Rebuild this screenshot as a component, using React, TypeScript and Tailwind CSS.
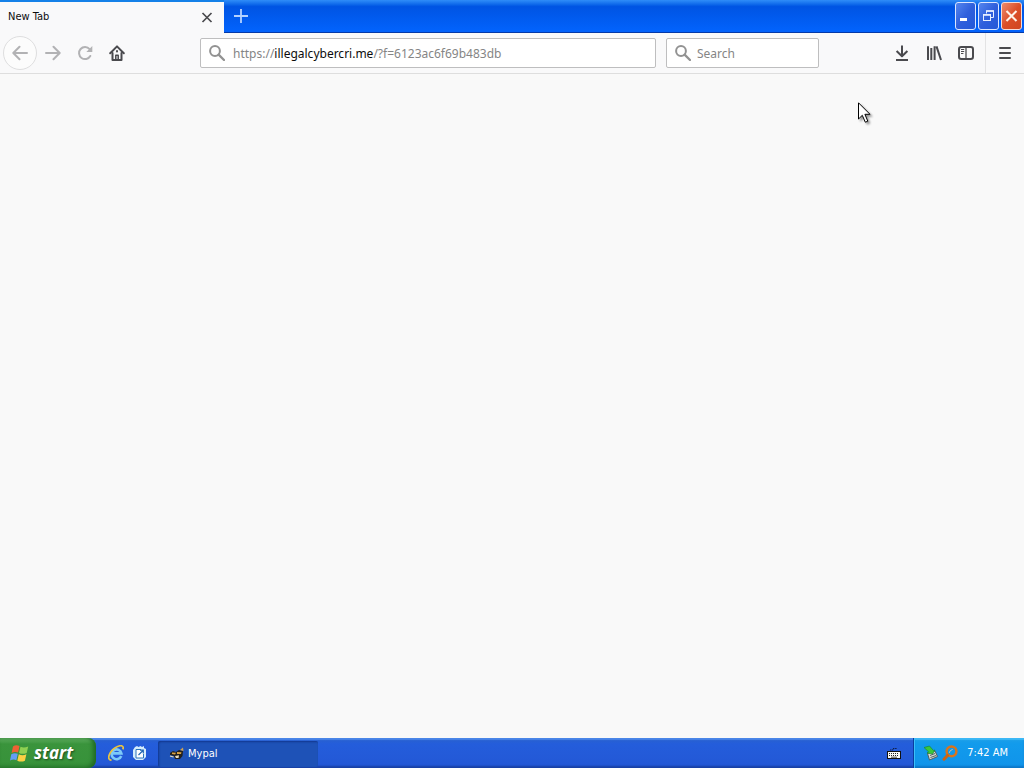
import { useState } from "react";
import type { ReactNode } from "react";

const GLYPH = "w-4 h-4 fill-none stroke-current";

interface ToolButtonProps {
  label: string;
  disabled?: boolean;
  children: ReactNode;
}

function ToolButton({ label, disabled, children }: ToolButtonProps) {
  return (
    <button
      aria-label={label}
      disabled={disabled}
      className="flex h-8 w-8 shrink-0 items-center justify-center text-[#4a4a4e] disabled:text-[#b2b2b4]"
    >
      {children}
    </button>
  );
}

function SearchGlyph() {
  return (
    <svg viewBox="0 0 16 16" className="h-4 w-4 shrink-0 fill-none stroke-[#929292]" strokeWidth="2">
      <circle cx="6" cy="6" r="4.9" />
      <path d="M9.6 9.6 L15 15" strokeWidth="2.3" strokeLinecap="round" />
    </svg>
  );
}

function TabStrip() {
  return (
    <header className="flex h-[33px] shrink-0 items-stretch bg-linear-to-b from-[#2f8df8] from-0% via-[#0054e3] via-20% to-[#0262fb] to-90%">
      <div className="flex w-56 shrink-0 items-center justify-between border-t-2 border-[#1581e8] bg-[#f9f9fa] pl-2 pr-[11px] text-[11px] text-[#0c0c0d]">
        <span>New Tab</span>
        <button aria-label="Close tab" className="text-[#4a4a4e]">
          <svg viewBox="0 0 12 12" className="h-3 w-3 fill-none stroke-current" strokeWidth="1.7">
            <path d="M1.5 1 L10.5 10 M10.5 1 L1.5 10" />
          </svg>
        </button>
      </div>
      <div className="flex flex-1 items-start justify-between border-b border-[#0439a8]">
        <button aria-label="New tab" className="flex h-8 w-[34px] items-center justify-center text-[#b4d2ff]">
          <svg viewBox="0 0 14 14" className="h-3.5 w-3.5 fill-none stroke-current" strokeWidth="1.8">
            <path d="M7 0 V14 M0 7 H14" />
          </svg>
        </button>
        <WindowButtons />
      </div>
    </header>
  );
}

function WindowButtons() {
  return (
    <div className="flex gap-0.5 pr-0.5 pt-0.5">
      <button
        aria-label="Minimize"
        className="h-7 w-[21px] rounded-[3px] border border-[#dbe6ff] bg-linear-to-br from-[#5585ee] via-[#2f5fdc] to-[#2458d8]"
      >
        <svg viewBox="0 0 19 26" className="h-[26px] w-[19px]">
          <rect x="4" y="15" width="7" height="3" fill="#fff" />
        </svg>
      </button>
      <button
        aria-label="Restore"
        className="h-7 w-[21px] rounded-[3px] border border-[#dbe6ff] bg-linear-to-br from-[#5585ee] via-[#2f5fdc] to-[#2458d8]"
      >
        <svg viewBox="0 0 19 26" className="h-[26px] w-[19px] fill-none stroke-[#e6eeff]">
          <path d="M7.5 10.5 V8 H14.5 V14.5 H12" />
          <path d="M7 8 H15" strokeWidth="1.6" />
          <rect x="4.5" y="11.5" width="7" height="6" />
          <path d="M4 12 H12" strokeWidth="1.6" />
        </svg>
      </button>
      <button
        aria-label="Close"
        className="h-7 w-[21px] rounded-[3px] border border-[#f6dcd6] bg-linear-to-br from-[#ec8a6c] via-[#dc4f28] to-[#cf4620]"
      >
        <svg viewBox="0 0 19 26" className="h-[26px] w-[19px] fill-none stroke-[#fff3e8]" strokeWidth="2.1">
          <path d="M4.5 8 L14.5 18 M14.5 8 L4.5 18" />
        </svg>
      </button>
    </div>
  );
}

function AddressBar() {
  const [address, setAddress] = useState("https://illegalcybercri.me/?f=6123ac6f69b483db");
  const parts = address.match(/^(\w+:\/\/)?([^/]*)(.*)$/);

  return (
    <div className="group flex h-[30px] min-w-0 flex-1 items-center gap-2 rounded-xs border border-[#bebebf] bg-white px-2">
      <SearchGlyph />
      <div className="relative flex h-full min-w-0 flex-1 items-center">
        {/* the domain is emphasised until the field gets the focus */}
        <div
          aria-hidden="true"
          className="pointer-events-none absolute inset-x-0 overflow-hidden whitespace-pre pt-0.5 text-[12px] text-[#858585] group-focus-within:hidden"
        >
          {parts?.[1]}
          <span className="text-[#0c0c0d]">{parts?.[2]}</span>
          {parts?.[3]}
        </div>
        <input
          type="text"
          aria-label="Search or enter address"
          value={address}
          onChange={(e) => setAddress(e.target.value)}
          className="w-full bg-transparent pt-0.5 text-[12px] text-transparent outline-none focus:text-[#0c0c0d]"
        />
      </div>
    </div>
  );
}

function Toolbar() {
  return (
    <nav className="flex h-[41px] shrink-0 items-center border-b border-[#dedede] bg-[#f9f9fa] px-[3px]">
      <button
        aria-label="Back"
        disabled
        className="flex h-[34px] w-[34px] shrink-0 items-center justify-center rounded-full border border-[#dededf] bg-[#fcfcfc] text-[#b2b2b4]"
      >
        <svg viewBox="0 0 16 16" className={GLYPH} strokeWidth="2" strokeLinecap="round" strokeLinejoin="round">
          <path d="M15 8 H1.5 M7.5 1.8 L1.3 8 L7.5 14.2" />
        </svg>
      </button>
      <ToolButton label="Forward" disabled>
        <svg viewBox="0 0 16 16" className={GLYPH} strokeWidth="2" strokeLinecap="round" strokeLinejoin="round">
          <path d="M1 8 H14.5 M8.5 1.8 L14.7 8 L8.5 14.2" />
        </svg>
      </ToolButton>
      <ToolButton label="Reload" disabled>
        <svg viewBox="0 0 16 16" className={GLYPH} strokeWidth="2">
          <path d="M12.6 4.2 A6 6 0 1 0 13.3 11" strokeLinecap="round" />
          <path d="M15.3 1 V7 H9.3 Z" fill="currentColor" stroke="none" />
        </svg>
      </ToolButton>
      <ToolButton label="Home">
        <svg viewBox="0 0 16 16" className={GLYPH} strokeWidth="2" strokeLinecap="round" strokeLinejoin="round">
          <path d="M1.2 8.2 L8 1.4 L14.8 8.2" />
          <path d="M3.5 8 V15 H12.5 V8" />
          <path d="M6.8 15 V10.2 H9.2 V15" strokeWidth="1.5" />
          <path d="M8 6 V6.6" />
        </svg>
      </ToolButton>

      <div className="flex min-w-0 flex-1 items-center gap-2.5 px-[67px] font-['Noto_Sans','Open_Sans',sans-serif]">
        <AddressBar />
        <label className="flex h-[30px] w-[153px] items-center gap-[6px] rounded-xs border border-[#bebebf] bg-white px-2">
          <SearchGlyph />
          <input
            type="text"
            aria-label="Search"
            placeholder="Search"
            className="w-full min-w-0 bg-transparent pt-0.5 text-[12px] text-[#0c0c0d] outline-none placeholder:text-[#858585]"
          />
        </label>
      </div>

      <ToolButton label="Downloads">
        <svg viewBox="0 0 16 16" className={GLYPH} strokeWidth="2" strokeLinejoin="round">
          <path d="M8 0.5 V11 M2.6 6 L8 11.3 L13.4 6 M2 15 H14" />
        </svg>
      </ToolButton>
      <ToolButton label="Library">
        <svg viewBox="0 0 16 16" className={GLYPH} strokeWidth="2">
          <path d="M2 1.2 V15 M5.3 3 V15 M8.6 1.2 V15 M10.5 1.4 L15 15" />
        </svg>
      </ToolButton>
      <ToolButton label="Sidebars">
        <svg viewBox="0 0 16 16" className={GLYPH} strokeWidth="2">
          <rect x="1" y="2" width="14" height="12" rx="2.2" />
          <path d="M8 2 V14" strokeWidth="1.3" />
          <path d="M3 4.5 H6.2 M3 6.5 H6.2 M3 8.5 H5.4" strokeWidth="1" />
        </svg>
      </ToolButton>
      <div className="mx-[3px] h-full w-px shrink-0 bg-[#e3e3e4]" />
      <ToolButton label="Open menu">
        <svg viewBox="0 0 16 16" className={GLYPH} strokeWidth="2" strokeLinecap="round">
          <path d="M3 3 H13 M3 8 H13 M3 13 H13" />
        </svg>
      </ToolButton>
    </nav>
  );
}

function Taskbar() {
  return (
    <footer className="flex h-[30px] shrink-0 items-stretch bg-linear-to-b from-[#2a62cc] from-0% via-[#245ddb] via-20% to-[#2358d6] to-90% text-[11px] text-white shadow-[inset_0_2px_1px_#4a86e8,inset_0_-2px_2px_#1941a5]">
      <button className="flex w-24 shrink-0 items-center gap-1 rounded-r-lg bg-linear-to-b from-[#5fae60] from-0% via-[#3a943c] via-20% to-[#37923a] to-100% pl-2.5 shadow-[inset_-3px_-1px_4px_#1f6a24]">
        <svg viewBox="0 0 20 20" className="h-5 w-5">
          <path d="M3 3.5 Q6 1.2 9.5 3.1 L8.1 9.6 Q5 8.1 1.6 10 Z" fill="#ee6134" />
          <path d="M10.5 3.7 Q13.8 5.4 18.2 3.5 L16.7 10 Q12.8 11.7 9 10 Z" fill="#8fd052" />
          <path d="M1.3 11.2 Q4.5 9.4 7.8 10.8 L6.4 17.2 Q3.3 15.7 0 17.6 Z" fill="#659df5" />
          <path d="M8.8 11.3 Q12.5 13 16.4 11.3 L14.9 17.7 Q11.2 19.5 7.3 17.7 Z" fill="#fbd044" />
        </svg>
        <span className="font-['Open_Sans','Noto_Sans',sans-serif] text-[17px] font-bold italic leading-5 [text-shadow:1px_1px_2px_#1c4d1c]">
          start
        </span>
      </button>

      <div className="flex items-center gap-2 pl-3 pr-[10px]">
        <button aria-label="Internet Explorer">
          <svg viewBox="0 0 16 16" className="h-4 w-4 fill-none">
            <path d="M13.2 11 A4.9 4.9 0 1 1 13.4 8.4 H5" stroke="#7dcaf8" strokeWidth="2.6" />
            <path d="M3.5 15.2 C-2.5 15 2 5 9 1.8 C13 -0.2 16.4 0.6 14.8 4.4" stroke="#ecc53f" strokeWidth="1.7" />
          </svg>
        </button>
        <button aria-label="Show desktop">
          <svg viewBox="0 0 16 16" className="h-4 w-4">
            <path d="M3 2 L5 1 L6.5 2 L8.5 1 L10 2 L12 1 V3 L14 4 V12 L11 15 H4 L1 12 V5 Z" fill="#d5ecfb" />
            <path d="M9 4.5 H4 V13 H11.5 V9" stroke="#2a74bd" fill="#fff" />
            <path d="M6.5 10 L11 5.5 M8 5.2 H11.3 V8.5" stroke="#2267b4" strokeWidth="1.2" fill="none" />
          </svg>
        </button>
      </div>

      <div className="flex flex-1 items-end pb-px">
        <button className="flex h-[26px] w-40 items-center gap-[3px] rounded-xs bg-[#1e52b7] pl-[11px] shadow-[inset_1px_1px_2px_#12378f]">
          <svg viewBox="0 0 16 16" className="h-4 w-4">
            <path d="M1 7 L4 5 L7 6 L10 4 L14 5 L13.5 10 L11 13 H6 L5 10 L1 9 Z" fill="#23211c" />
            <path d="M3 6.5 L7 6.7 L6 8.5 L3 8 Z M8 6 L12.5 6.3 L12 8 L8 8 Z" fill="#d9a343" />
            <path d="M6 10 L10 9.3 L9.5 12 H7 Z" fill="#eadfbd" />
            <path d="M11 4 L14 1.5 L14.5 5" fill="#d0a050" />
            <path d="M1 10 L4.5 11" stroke="#eadfbd" strokeWidth="1.2" />
          </svg>
          <span>Mypal</span>
        </button>
      </div>

      <button aria-label="On-screen keyboard" className="mr-3">
        <svg viewBox="0 0 14 14" className="h-3.5 w-3.5">
          <path d="M3 4 H6 V2.5 H10" stroke="#10204c" strokeDasharray="1.5 0.7" fill="none" />
          <rect x="0.5" y="5.5" width="13" height="7" fill="#f8f8f4" stroke="#111" />
          <path d="M2 7.5 H12 M2 9.5 H12" stroke="#222" strokeDasharray="1 1" />
          <path d="M4 11.2 H10" stroke="#222" strokeWidth="0.8" />
        </svg>
      </button>

      <div className="flex items-center gap-[3px] border-l border-[#0a3d9e] bg-linear-to-b from-[#1c9fe8] from-0% via-[#129bec] via-20% to-[#1093ea] to-100% pl-[9px] pr-4 shadow-[inset_1px_0_0_#3bc0fa,inset_0_2px_1px_#3cb8f6,inset_0_-2px_2px_#0d76c8]">
        <svg viewBox="0 0 16 16" className="h-4 w-4">
          <path d="M4.5 8.5 L12 6 L14.5 11.5 L6.5 15 Z" fill="#d8dccf" stroke="#4f5c61" />
          <path d="M7 10.5 L12 8.5 M7.5 12.5 L13 10.5" stroke="#53626a" />
          <path d="M1 2.5 L6.5 1 L10.5 5.5 L12 5 L9.5 9 L4 8 L5.5 6.8 Z" fill="#39c83a" stroke="#167f2d" strokeWidth="0.6" />
        </svg>
        <svg viewBox="0 0 16 16" className="h-4 w-4 fill-none" strokeLinecap="round">
          <circle cx="9.5" cy="6.3" r="4.9" stroke="#d9741c" strokeWidth="2.5" />
          <path d="M5.5 10.5 L2 14.2" stroke="#cc6415" strokeWidth="3" />
          <path d="M7.3 7.5 Q7.7 5 10.3 4.5" stroke="#f6c891" strokeWidth="0.8" />
        </svg>
        <time className="pl-1.5">7:42 AM</time>
      </div>
    </footer>
  );
}

export default function App() {
  return (
    <div className="relative flex h-screen flex-col overflow-hidden bg-[#f9f9f9] font-['DejaVu_Sans_Condensed','Noto_Sans',sans-serif]">
      <TabStrip />
      <Toolbar />
      <main className="flex-1" />
      <Taskbar />
      {/* mouse pointer */}
      <svg
        viewBox="0 0 16 24"
        className="pointer-events-none absolute left-[858px] top-[102px] h-6 w-4 drop-shadow-[2px_2px_1px_rgba(0,0,0,0.4)]"
      >
        <path
          d="M0.5 0.8 V17 L4.3 13.3 L7.3 20.2 L9.8 19.2 L6.9 12.3 H12 Z"
          fill="#fff"
          stroke="#000"
          strokeLinejoin="round"
        />
      </svg>
    </div>
  );
}
